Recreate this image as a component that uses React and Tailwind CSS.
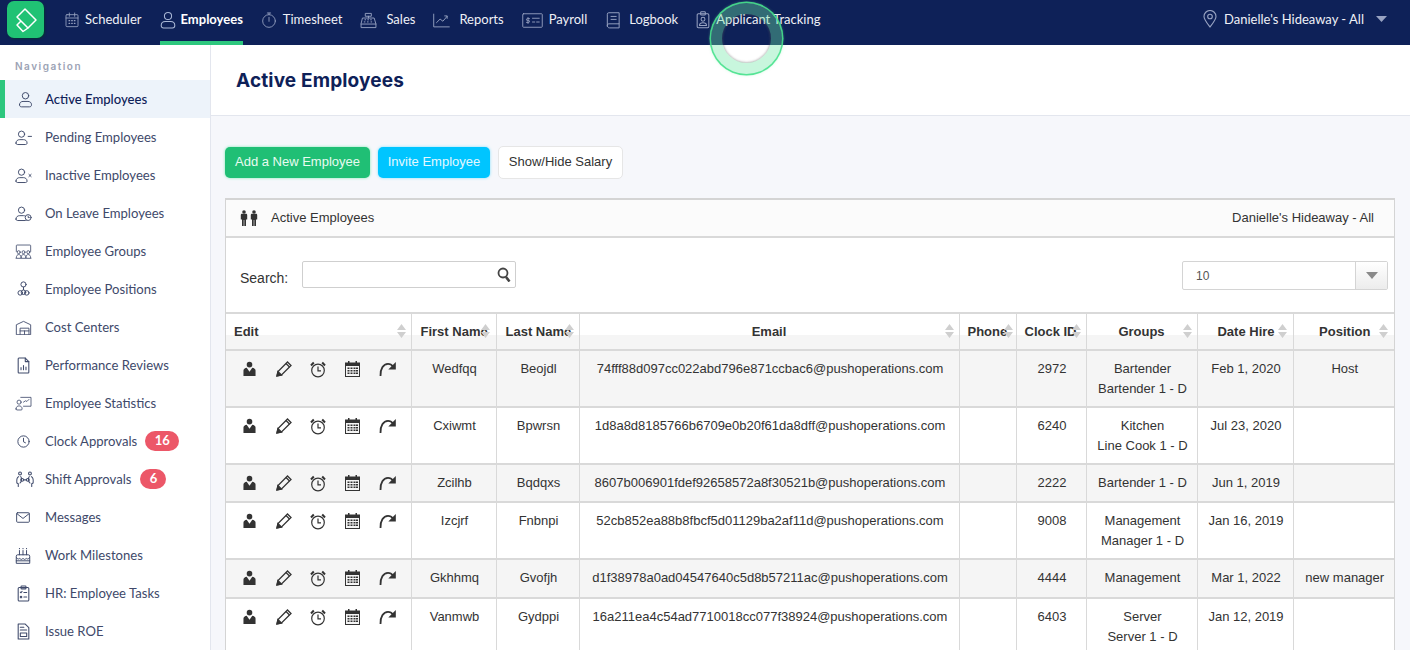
import React from "react";

const S = ({ w = 16, h = 16, vb = "0 0 24 24", sw = 1.3, children, cls = "" }) => (
  <svg width={w} height={h} viewBox={vb} fill="none" stroke="currentColor" strokeWidth={sw} strokeLinecap="round" strokeLinejoin="round" className={`shrink-0 ${cls}`}>{children}</svg>
);

const person = (
  <>
    <circle cx="10" cy="7" r="4.2" />
    <path d="M2.5 19c0-3.2 2.5-4.6 5-4.6h5c2.5 0 5 1.4 5 4.6 0 1.4-1 2-2.2 2H4.7c-1.2 0-2.2-.6-2.2-2Z" />
  </>
);

const Nav = {
  calendar: <S w={16} h={18}><rect x="3" y="4" width="18" height="18" rx="1.5" /><path d="M3 9h18M8 1.5v5M16 1.5v5" /><path d="M7.5 13h1M11.5 13h1M15.5 13h1M7.5 17h1M11.5 17h1M15.5 17h1" strokeWidth="1.8" /></S>,
  user: <S w={16} h={18} vb="0 0 20 22"><circle cx="10" cy="6" r="4.5" /><path d="M1.5 18c0-3.4 2.6-5 5.2-5h6.6c2.6 0 5.200 1.600 5.200 5 0 2-1.200 3-3 3H4.500c-1.800 0-3-1-3-3Z" /></S>,
  stopwatch: <S w={16} h={18}><circle cx="12" cy="13.5" r="9.5" /><path d="M12 8v6M9.5 1.500h5M12 1.500V4" /></S>,
  register: <S w={17} h={17}><path d="M8 2h8v4H8zM12 6v2.500M4 8.500h16L22.500 17v5h-21v-5zM1.500 17h21" /><path d="M7 11h1M11 11h1M15 11h1M6 14h1M10.500 14h1M15.500 14h1" strokeWidth="1.4" /></S>,
  chart: <S w={17} h={15} vb="0 0 24 20"><path d="M1 1v18h22" /><path d="M5 13l5-5 4 3 6-7M16.500 3.500H20V7" /></S>,
  bill: <S w={21} h={15} vb="0 0 28 20" sw={1.2}><rect x="1" y="1" width="26" height="18" rx="1" /><path d="M14 7h9M14 12h3M19.500 12H23M8 6v8M10 7.500H7.200a1.200 1.200 0 0 0 0 2.500h1.600a1.200 1.200 0 0 1 0 2.500H6" /></S>,
  book: <S w={15} h={17} vb="0 0 20 23"><path d="M3 19.500V3a2 2 0 0 1 2-2h14v15H5a2 2 0 0 0-2 2c0 1.800 1 3.500 3 3.500h13V16" /><path d="M8 6h7M8 10h7" /></S>,
  clipboard: <S w={14} h={18} vb="0 0 18 23"><rect x="1.500" y="3.500" width="15" height="18" rx="1.500" /><rect x="6" y="1" width="6" height="4" rx="1" /><circle cx="9" cy="10.500" r="2.500" /><path d="M4.500 18.500c0-2.400 1.800-3.500 4.500-3.500s4.500 1.100 4.500 3.500z" /></S>,
};

const Side = {
  active: <S w={15} vb="0 0 20 22" h={17}><circle cx="10" cy="6" r="4.300" /><path d="M2 18c0-3 2.200-4.400 4.700-4.400h6.600c2.500 0 4.700 1.400 4.700 4.400 0 1.800-1 2.800-2.800 2.800H4.800C3 20.800 2 19.800 2 18Z" /></S>,
  pending: <S w={18} h={17} vb="0 0 24 23">{person}<path d="M19 10h4.500" /></S>,
  inactive: <S w={18} h={17} vb="0 0 24 23">{person}<path d="M20 10l3 3M23 10l-3 3" /></S>,
  leave: <S w={18} h={17} vb="0 0 24 23">{person}<circle cx="19" cy="17" r="4" fill="white" /><path d="M19 15v2h1.500" /></S>,
  groups: <S w={17} h={15} vb="0 0 24 22" sw={1.2}><path d="M1.500 11V2.500a1 1 0 0 1 1-1h19a1 1 0 0 1 1 1V11" /><circle cx="5" cy="12" r="2.200" /><circle cx="12" cy="12" r="2.200" /><circle cx="19" cy="12" r="2.200" /><path d="M1.500 20c0-3 1.500-4.500 3.500-4.500S8.500 17 8.500 20M8.500 20c0-3 1.500-4.500 3.500-4.500s3.500 1.500 3.500 4.500M15.500 20c0-3 1.500-4.500 3.500-4.500s3.500 1.500 3.500 4.500M1 21h22" /></S>,
  positions: <S w={13} h={16} vb="0 0 20 24" sw={1.500}><circle cx="10" cy="5" r="4" /><circle cx="5" cy="18" r="3.500" /><circle cx="15" cy="18" r="3.500" /><circle cx="10" cy="17" r="3.500" /><path d="M10 9v4" /></S>,
  cost: <S w={17} h={15} vb="0 0 24 22" sw={1.300}><path d="M1.500 21V7L12 2l10.500 5v14z" /><path d="M7 21V12h13v9M7 16h13M13.500 16v5" /></S>,
  perf: <S w={13} h={17} vb="0 0 18 24" sw={1.500}><path d="M2.500 1.500h9l5 5v15a1 1 0 0 1-1 1h-13a1 1 0 0 1-1-1v-19a1 1 0 0 1 1-1Z" /><path d="M11.500 1.500v5h5M5.500 18v-3M9 18v-6M12.500 18v-4" /></S>,
  stats: <S w={17} h={15} vb="0 0 24 22" sw={1.200}><path d="M8 2h15v13H12" /><path d="M12 9l3-2 2 1 3-3" /><circle cx="5.500" cy="9" r="3" /><path d="M1 19c0-3 2-4.500 4.500-4.500S10 16 10 19a1.500 1.500 0 0 1-1.500 1.500h-6A1.500 1.500 0 0 1 1 19Z" /></S>,
  clock: <S w={13} h={13} vb="0 0 20 20" sw={1.500}><circle cx="10" cy="10" r="8.700" /><path d="M10 5v5.500l3 1.500" /></S>,
  shift: <S w={20} h={17} vb="0 0 28 24" sw={1.500}><circle cx="7" cy="3.500" r="2" /><circle cx="21" cy="3.500" r="2" /><path d="M5 8C2 9 2 12 2.500 17l2 1v4M23 8c3 1 3 4 2.500 9l-2 1v4M8 8c1.500 1 1.500 8-1 9M20 8c-1.500 1-1.500 8 1 9" /><circle cx="10" cy="12.500" r="2" /><circle cx="18" cy="12.500" r="2" /><path d="M12 12.500h4" /></S>,
  mail: <S w={14} h={11} vb="0 0 22 17" sw={1.500}><rect x="1" y="1" width="20" height="15" rx="1.500" /><path d="M1.500 2.500 11 10l9.500-7.500" /></S>,
  cake: <S w={16} h={17} vb="0 0 22 24" sw={1.400}><path d="M1.500 22.500V13a2 2 0 0 1 2-2h15a2 2 0 0 1 2 2v9.500zM1.500 15c2 2.500 4 2.500 5 1 1.500 2 3.500 2 4.500 0 1 2 3 2 4.500 0 1 1.500 3 1.500 5-1M1.500 19.500h19M6 11V5M11 11V5M16 11V5M6 2v.500M11 2v.500M16 2v.500" /></S>,
  tasks: <S w={13} h={17} vb="0 0 18 24" sw={1.500}><rect x="1.500" y="3.500" width="15" height="19" rx="1.500" /><rect x="5.500" y="1.500" width="7" height="4" rx="1" /><path d="M4.500 10l1 1 1.500-2M9.500 10.500h4M4.500 16l2 2M6.500 16l-2 2M9.500 17h4" /></S>,
  roe: <S w={13} h={17} vb="0 0 18 24" sw={1.500}><path d="M1.500 1.500h10l5 5v16h-15z" /><path d="M4.500 6h5M4.500 10h9M4.500 14h9v5h-9z" /></S>,
};

const sideItems = [
  ["Active Employees", Side.active, null],
  ["Pending Employees", Side.pending, null],
  ["Inactive Employees", Side.inactive, null],
  ["On Leave Employees", Side.leave, null],
  ["Employee Groups", Side.groups, null],
  ["Employee Positions", Side.positions, null],
  ["Cost Centers", Side.cost, null],
  ["Performance Reviews", Side.perf, null],
  ["Employee Statistics", Side.stats, null],
  ["Clock Approvals", Side.clock, "16"],
  ["Shift Approvals", Side.shift, "6"],
  ["Messages", Side.mail, null],
  ["Work Milestones", Side.cake, null],
  ["HR: Employee Tasks", Side.tasks, null],
  ["Issue ROE", Side.roe, null],
];

const topItems = [
  ["Scheduler", Nav.calendar, "w-[21px]"],
  ["Employees", Nav.user, "w-[21px]"],
  ["Timesheet", Nav.stopwatch, "w-[22px]"],
  ["Sales", Nav.register, "w-[26px]"],
  ["Reports", Nav.chart, "w-[26px]"],
  ["Payroll", Nav.bill, "w-[27px]"],
  ["Logbook", Nav.book, "w-[24px]"],
  ["Applicant Tracking", Nav.clipboard, "w-[20px]"],
];

const rows = [
  ["Wedfqq", "Beojdl", "74fff88d097cc022abd796e871ccbac6@pushoperations.com", "2972", ["Bartender", "Bartender 1 - D"], "Feb 1, 2020", "Host", "h-[57px]"],
  ["Cxiwmt", "Bpwrsn", "1d8a8d8185766b6709e0b20f61da8dff@pushoperations.com", "6240", ["Kitchen", "Line Cook 1 - D"], "Jul 23, 2020", "", "h-[57px]"],
  ["Zcilhb", "Bqdqxs", "8607b006901fdef92658572a8f30521b@pushoperations.com", "2222", ["Bartender 1 - D"], "Jun 1, 2019", "", "h-[38px]"],
  ["Izcjrf", "Fnbnpi", "52cb852ea88b8fbcf5d01129ba2af11d@pushoperations.com", "9008", ["Management", "Manager 1 - D"], "Jan 16, 2019", "", "h-[57px]"],
  ["Gkhhmq", "Gvofjh", "d1f38978a0ad04547640c5d8b57211ac@pushoperations.com", "4444", ["Management"], "Mar 1, 2022", "new manager", "h-[39px]"],
  ["Vanmwb", "Gydppi", "16a211ea4c54ad7710018cc077f38924@pushoperations.com", "6403", ["Server", "Server 1 - D"], "Jan 12, 2019", "", "h-[57px]"],
];

const heads = [
  ["Edit", "text-left pl-2", "pr-[5px]"],
  ["First Name", "text-left pl-[9px]", "pr-[6px]"],
  ["Last Name", "text-left pl-[9px]", "pr-[5px]"],
  ["Email", "text-center", "pr-[5px]"],
  ["Phone", "text-left pl-2", "pr-[3px]"],
  ["Clock ID", "text-left pl-2", "pr-[5px]"],
  ["Groups", "text-center", "pr-[5px]"],
  ["Date Hire", "text-center pl-[2px]", "pr-[6px]"],
  ["Position", "text-center pl-[2px]", "pr-[6px]"],
];

const Sort = () => (
  <svg width="9" height="14" viewBox="0 0 9 14" className="shrink-0" fill="#cfcfcf">
    <path d="M4.500 0 9 6H0zM4.500 14 0 8h9z" />
  </svg>
);

const ActionIcons = () => (
  <div className="flex items-start text-[#333] ml-[17px] h-[18px]">
    <svg width="13" height="16" viewBox="0 0 14 16" fill="#333"><circle cx="7" cy="3.300" r="3" /><path d="M0.500 15.500V9.500c0-1.500 1.500-2.500 3.500-2.800L7 11l3-4.300c2 .3 3.500 1.300 3.500 2.800v6z" /></svg>
    <svg width="16" height="16" viewBox="0 0 16 16" fill="none" stroke="#333" strokeWidth="1.300" className="ml-[20px]"><path d="M1 15l1-4.500L11.500 1l3.500 3.500L5.500 14z" /><path d="M1 15l1-4.500L5.500 14z" fill="#333" /><path d="M10 2.500l3.500 3.500" /></svg>
    <svg width="16" height="17" viewBox="0 0 16 17" fill="none" stroke="#333" strokeWidth="1.200" className="ml-[18px]"><circle cx="8" cy="9.500" r="6.300" /><path d="M8 5.500v4.300h3" /><path d="M1 4.500 3.800 1.500M15 4.500 12.200 1.500" strokeWidth="2" /></svg>
    <svg width="15" height="16" viewBox="0 0 15 16" className="ml-[19px]"><path fill="#333" d="M0 1.500h3V0h1.500v1.500h6V0H12v1.500h3V16H0z" /><path fill="#f5f5f5" d="M1 5h13v10H1z" /><path fill="#333" d="M2.500 6.500h2v1.500h-2zM5.500 6.500h2v1.500h-2zM8.500 6.500h2v1.500h-2zM11 6.500h2v1.500h-2zM2.500 9h2v1.500h-2zM5.500 9h2v1.500h-2zM8.500 9h2v1.500h-2zM11 9h2v1.500h-2zM2.500 11.500h2V13h-2zM5.500 11.500h2V13h-2zM8.500 11.500h2V13h-2zM11 11.500h2V13h-2z" /></svg>
    <svg width="17" height="16" viewBox="0 0 17 16" fill="none" className="ml-[19px]"><path d="M1.500 15C1 8 4.500 2.800 9 2.800c2 0 3.800 1 5 2.700" stroke="#333" strokeWidth="1.800" /><path d="M16.800 1v7.500H9.300z" fill="#333" /></svg>
  </div>
);

export default function App() {
  const lato = "font-['Lato','Liberation_Sans',sans-serif]";
  const helv = "font-['Liberation_Sans',Arial,sans-serif]";
  const td = "align-top pt-[8px] pl-[2px] border-b-2 border-l border-[#d9d9d9]";
  return (
    <div className={`relative w-[1410px] h-[650px] overflow-hidden bg-white flex flex-col ${lato}`}>
      <header className="h-[45px] shrink-0 bg-[#0e2158] flex items-stretch text-white">
        <div className="ml-[7px] mt-[1px] w-[37px] h-[37px] rounded-[7px] bg-[#20c274] shadow-[1px_1px_2px_rgba(0,60,30,0.6)]">
          <svg width="37" height="37" viewBox="0 0 37 37" fill="none" stroke="white" strokeWidth="1.500" strokeLinejoin="round">
            <path d="M18 8 29 19 21 27 10 16Z" />
            <path d="M14 20 10 24 16 30.500 21 27" />
          </svg>
        </div>
        <nav className="ml-[20px] flex gap-[18px]">
          {topItems.map(([label, icon, w]) => {
            const on = label === "Employees";
            return (
              <div key={label} className={`flex items-center h-full pb-[1px] border-b-[4px] ${on ? "border-[#2dc77e]" : "border-transparent"}`}>
                <span className={`${w} flex items-center ${on ? "text-[#aab8d6]" : "text-[#98a3c2]"}`}>{icon}</span>
                <span className={`text-[13px] whitespace-nowrap ${on ? "font-bold text-white" : "text-[#eef0f6]"}`}>{label}</span>
              </div>
            );
          })}
        </nav>
        <div className="ml-auto flex items-center pb-[5px] pr-[23px]">
          <svg width="14" height="18" viewBox="0 0 14 18" fill="none" stroke="#98a3c2" strokeWidth="1.100" className="mr-[7px] mb-[2px]"><path d="M7 17C3.500 12.500 1 9.500 1 6.500a6 6 0 0 1 12 0C13 9.500 10.500 12.500 7 17Z" /><circle cx="7" cy="6.500" r="2.300" /></svg>
          <span className="text-[13px] text-[#eef0f6] whitespace-nowrap">Danielle's Hideaway - All</span>
          <svg width="11" height="6" viewBox="0 0 11 6" fill="#98a3c2" className="ml-[12px] mb-[3px]"><path d="M0 0h11L5.500 6z" /></svg>
        </div>
      </header>

      <div className="flex flex-1 min-h-0">
        <aside className="w-[211px] shrink-0 border-r border-[#e3e6ee] bg-white">
          <div className="h-[35px] pl-[15px] pt-[15px] text-[10px] leading-[12px] font-semibold tracking-[1.500px] text-[#9ca3b5] font-['Inter',sans-serif]">Navigation</div>
          {sideItems.map(([label, icon, badge], i) => (
            <div key={label} className={`h-[38px] flex items-center text-[13.100px] ${i === 0 ? "bg-[#edf3fa] border-l-[5px] border-[#2dc77e] text-[#0e2158] font-medium" : "text-[#40496a]"}`}>
              <span className={`flex justify-center items-center text-[#3f4a6b] ${i === 0 ? "w-[40px]" : "w-[45px]"} ${label === "Shift Approvals" ? "pl-[5px]" : i === 0 ? "" : "pl-[1px]"}`}>{icon}</span>
              <span className="whitespace-nowrap pt-[2px]">{label}</span>
              {badge && (
                <span className={`h-[20px] rounded-full bg-[#ec5768] text-white text-[13px] font-bold flex items-center justify-center ${badge === "16" ? "ml-[8px] w-[34px]" : "ml-[9px] w-[26px]"}`}>{badge}</span>
              )}
            </div>
          ))}
        </aside>

        <main className="flex-1 min-w-0 bg-[#f6f7fb] overflow-hidden flex flex-col">
          <div className="h-[71px] shrink-0 bg-white border-b border-[#e3e6ee] flex items-center pl-[25px] pt-[2px]">
            <h1 className="text-[19px] font-bold tracking-[0.150px] text-[#0e2158] font-['Inter',sans-serif]">Active Employees</h1>
          </div>
          <div className={`pl-[14px] pr-[15px] pt-[30px] ${helv}`}>
            <div className="flex gap-[8px] h-[32px] text-[13px] items-center">
              <button className="w-[145px] h-[31px] rounded-[5px] bg-[#20bf75] text-[#e8fbf1] shadow-[0_0_3px_#7fe9b5]">Add a New Employee</button>
              <button className="w-[112px] h-[31px] rounded-[5px] bg-[#00c5ff] text-[#e4f8ff] shadow-[0_0_3px_#7fdfff]">Invite Employee</button>
              <button className="w-[125px] h-[33px] rounded-[5px] bg-white text-[#333] border border-[#e6e6e6]">Show/Hide Salary</button>
            </div>

            <section className="mt-[20px] w-[1170px] bg-white border-x border-t-2 border-[#d4d4d4] text-[#333] text-[13px]">
              <div className="h-[38px] flex items-center pl-[14px] pr-[20px] border-b-2 border-[#d9d9d9] bg-[#fbfbfb] bg-[radial-gradient(#ececec_0.600px,transparent_0.700px)] bg-[length:4px_4px]">
                <svg width="18" height="16" viewBox="0 0 18 16" fill="#333" className="mr-[13px]">
                  <circle cx="4" cy="2" r="1.800" /><path d="M0.800 5c0-.8.6-1.200 1.400-1.200h3.600c.8 0 1.400.4 1.400 1.200v4.500H6V16H4.300v-6h-.6v6H2V9.500H0.800z" />
                  <circle cx="14" cy="2" r="1.800" /><path d="M10.800 5c0-.8.6-1.200 1.400-1.200h3.600c.8 0 1.400.4 1.400 1.200v4.500H16V16h-1.700v-6h-.6v6H12V9.500h-1.200z" />
                </svg>
                <span>Active Employees</span>
                <span className="ml-auto">Danielle's Hideaway - All</span>
              </div>

              <div className="h-[74px] flex items-start pl-[14px] pr-[6px]">
                <span className="mt-[32px] text-[14px] leading-[16px]">Search:</span>
                <div className="ml-[14px] mt-[23px] w-[214px] h-[27px] rounded-[2px] border border-[#cfcfcf] flex items-center justify-end pr-[4px]">
                  <svg width="14" height="15" viewBox="0 0 14 15" fill="none" stroke="#444" strokeWidth="1.800"><circle cx="6" cy="6" r="4.500" /><path d="M9 10l3.500 4.500" strokeWidth="2.600" /></svg>
                </div>
                <div className="ml-auto mt-[23px] w-[206px] h-[29px] rounded-[2px] border border-[#d4d4d4] flex">
                  <span className="flex-1 pl-[13px] text-[12px] leading-[29px] text-[#555]">10</span>
                  <span className="w-[32px] border-l border-[#d4d4d4] bg-[linear-gradient(#fff,#ececec)] flex items-center justify-center">
                    <svg width="12" height="7" viewBox="0 0 12 7" fill="#8a8a8a"><path d="M0 0h12L6 7z" /></svg>
                  </span>
                </div>
              </div>

              <table className="w-[1168px] table-fixed border-collapse">
                <colgroup>
                  <col className="w-[185px]" /><col className="w-[85px]" /><col className="w-[83px]" /><col className="w-[380px]" /><col className="w-[57px]" /><col className="w-[70px]" /><col className="w-[111px]" /><col className="w-[96px]" /><col className="w-[101px]" />
                </colgroup>
                <thead>
                  <tr className="h-[37px] bg-[linear-gradient(#fff_60%,#f5f5f5_60%)]">
                    {heads.map(([h, align, pad], i) => (
                      <th key={h} className={`relative font-bold p-0 border-y-2 border-[#d9d9d9] ${i ? "border-l" : ""} ${align}`}>
                        <span className="whitespace-nowrap">{h}</span>
                        <span className={`absolute right-0 top-[10px] ${pad}`}><Sort /></span>
                      </th>
                    ))}
                  </tr>
                </thead>
                <tbody>
                  {rows.map((r, i) => (
                    <tr key={r[0]} className={`${r[7]} ${i % 2 === 0 ? "bg-[#f5f5f5]" : "bg-white"} leading-[20px] text-center`}>
                      <td className="align-top pt-[10px] border-b-2 border-[#d9d9d9]"><ActionIcons /></td>
                      <td className={td}>{r[0]}</td>
                      <td className={td}>{r[1]}</td>
                      <td className={`${td} whitespace-nowrap`}>{r[2]}</td>
                      <td className={td}></td>
                      <td className={td}>{r[3]}</td>
                      <td className={td}>{r[4].map((g) => <div key={g}>{g}</div>)}</td>
                      <td className={`${td} whitespace-nowrap`}>{r[5]}</td>
                      <td className={`${td} whitespace-nowrap`}>{r[6]}</td>
                    </tr>
                  ))}
                </tbody>
              </table>
            </section>
          </div>
        </main>
      </div>

      <div className="absolute left-[711px] top-[3px] w-[71px] h-[71px] rounded-full border-[11px] border-[rgba(110,231,165,0.38)] shadow-[0_0_0_1.500px_rgba(70,225,140,0.9),0_0_3px_1px_rgba(120,240,170,0.5),inset_0_0_2px_1px_rgba(90,90,90,0.35)] pointer-events-none" />
    </div>
  );
}
